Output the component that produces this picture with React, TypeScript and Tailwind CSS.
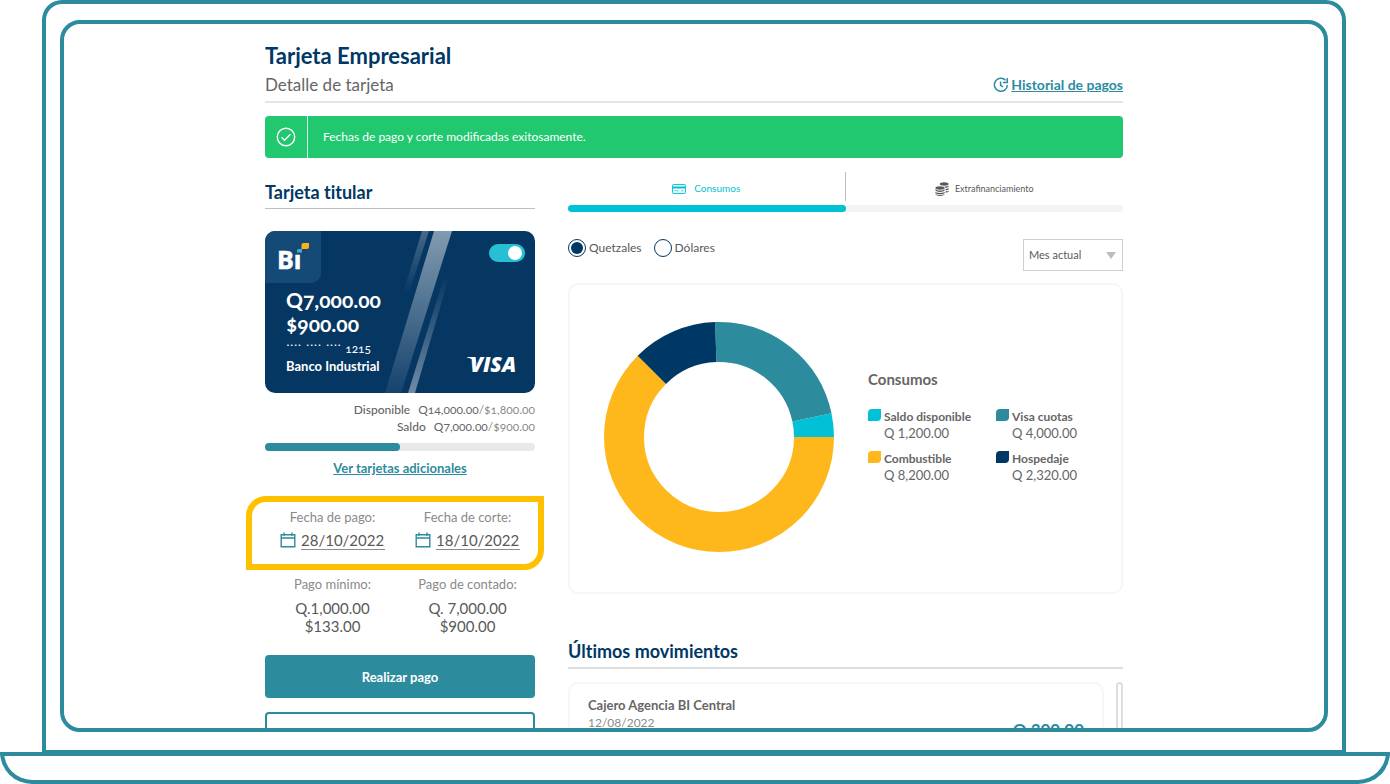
import React from 'react';

interface Slice {
  label: string;
  amount: string;
  color: string;
  swatch: string;
  start: number;
  sweep: number;
}

const slices: Slice[] = [
  { label: 'Saldo disponible', amount: 'Q 1,200.00', color: '#00c1d5', swatch: 'bg-[#00c1d5]', start: 348, sweep: 12 },
  { label: 'Visa cuotas', amount: 'Q 4,000.00', color: '#2d8b9e', swatch: 'bg-[#2d8b9e]', start: 268, sweep: 80 },
  { label: 'Combustible', amount: 'Q 8,200.00', color: '#ffb81c', swatch: 'bg-[#ffb81c]', start: 0, sweep: 225 },
  { label: 'Hospedaje', amount: 'Q 2,320.00', color: '#003865', swatch: 'bg-[#003865]', start: 225, sweep: 43 },
];

const payments = [
  { label: 'Pago mínimo:', quetzales: 'Q.1,000.00', dollars: '$133.00' },
  { label: 'Pago de contado:', quetzales: 'Q. 7,000.00', dollars: '$900.00' },
];

const dates = [
  { id: 'fecha-pago', label: 'Fecha de pago:', value: '28/10/2022' },
  { id: 'fecha-corte', label: 'Fecha de corte:', value: '18/10/2022' },
];

function HistoryIcon() {
  return (
    <svg viewBox="0 0 16 16" className="size-4" fill="none" stroke="currentColor" strokeWidth="1.5">
      <path d="M14.4 8A6.5 6.5 0 1 1 12.6 3.3" />
      <path d="M14.3 1v4.4h-4.4" />
      <path d="M7.6 4.6v3.8l2.4 1.4" />
    </svg>
  );
}

function CheckIcon() {
  return (
    <svg viewBox="0 0 20 20" className="size-5" fill="none" stroke="currentColor" strokeWidth="1.4">
      <circle cx="10" cy="10" r="8.7" />
      <path d="M5.6 10.3l2.9 2.9 6-6" />
    </svg>
  );
}

function CalendarIcon() {
  return (
    <svg viewBox="0 0 16 16" className="size-4" fill="none" stroke="#2d8b9e" strokeWidth="1.4">
      <path d="M1.2 2.8h13.6v11.9H1.2z" />
      <path d="M1.2 6h13.6M4 .6v3.2M12 .6v3.2" />
    </svg>
  );
}

function CardIcon() {
  return (
    <svg viewBox="0 0 14 10" className="h-[10px] w-[14px]" fill="none" stroke="currentColor">
      <rect x=".6" y=".6" width="12.8" height="8.8" rx=".6" />
      <path d="M.6 3.6h12.8" strokeWidth="2" />
      <path d="M2.5 6.8h4M9 6.8h2.5" strokeWidth=".8" />
    </svg>
  );
}

function CoinsIcon() {
  return (
    <svg viewBox="0 0 14 14" className="size-[14px]" fill="currentColor">
      <ellipse cx="9.2" cy="2" rx="4.4" ry="1.7" />
      <path d="M9.5 4.5c2 0 3.6-.5 4.1-1.1v1.3c-.5.7-1.9 1.1-3.4 1.1zM10.6 7c1.4-.1 2.5-.5 3-1v1.3c-.5.6-1.6 1-3 1zM10.6 9.4c1.4-.1 2.5-.5 3-1v1.2c-.5.6-1.6 1-3 1.1z" />
      <ellipse cx="5" cy="6" rx="4.6" ry="1.7" />
      <path d="M.4 7.3c.7.8 2.5 1.2 4.6 1.2s3.9-.4 4.6-1.2v1.3c-.6.8-2.5 1.3-4.6 1.3S1 9.4.4 8.6zM.4 9.7c.7.8 2.5 1.2 4.6 1.2s3.9-.4 4.6-1.2V11c-.6.8-2.5 1.3-4.6 1.3S1 11.8.4 11zM.4 12c.7.8 2.5 1.1 4.6 1.1s3.9-.3 4.6-1.1v.6c-.6.8-2.5 1.3-4.6 1.3S1 13.4.4 12.6z" />
    </svg>
  );
}

function BiLogo() {
  return (
    <svg viewBox="0 0 36 34" className="h-[34px] w-9" role="img" aria-label="Bi">
      <text x="0" y="26" fontSize="25" fontWeight="700" fill="#fff" stroke="#fff" strokeWidth=".6" fontFamily="'Open Sans', sans-serif">
        Bı
      </text>
      <path d="M21.5 6H25v3.5h-5V7.5q0-1.5 1.5-1.5z" fill="#4aa9cf" />
      <path d="M26.5 0H32v4q0 2-2 2h-5.5V2q0-2 2-2z" fill="#fcb316" />
    </svg>
  );
}

function VisaLogo() {
  return (
    <svg viewBox="0 0 54 30" className="h-[30px] w-[54px]" role="img" aria-label="Visa">
      <text x="5" y="28" fontSize="21" fontWeight="800" fontStyle="italic" fill="#fff" fontFamily="'Open Sans', sans-serif">
        VISA
      </text>
      <path d="M2 13h8l1.5 7Q8 14.500 2 13.600z" fill="#fff" />
    </svg>
  );
}

function CardStripes() {
  return (
    <svg viewBox="0 0 270 162" preserveAspectRatio="none" className="absolute inset-0 size-full">
      <defs>
        <linearGradient id="stripe" x1="0" y1="0" x2="0" y2="1">
          <stop offset="0" stopColor="#fff" stopOpacity=".5" />
          <stop offset="1" stopColor="#fff" stopOpacity=".06" />
        </linearGradient>
        <linearGradient id="stripeLow" x1="0" y1="0" x2="0" y2="1">
          <stop offset="0" stopColor="#fff" stopOpacity="0" />
          <stop offset="1" stopColor="#fff" stopOpacity=".42" />
        </linearGradient>
        <linearGradient id="stripeTop" x1="0" y1="0" x2="0" y2="1">
          <stop offset="0" stopColor="#fff" stopOpacity=".25" />
          <stop offset="1" stopColor="#fff" stopOpacity="0" />
        </linearGradient>
      </defs>
      <path d="M169 0h18l-51 162h-16z" fill="url(#stripe)" />
      <path d="M157 0h7l-20 62h-6z" fill="url(#stripeTop)" />
      <path d="M179 46h5l-34 116h-7z" fill="url(#stripeLow)" />
    </svg>
  );
}

function CreditCard() {
  return (
    <div className="relative mt-[22px] h-[162px] overflow-hidden rounded-[10px] bg-[#063763] text-white">
      <CardStripes />
      <div className="relative flex h-full flex-col">
        <div className="flex items-start justify-between">
          <div className="h-[52px] w-14 rounded-br-[10px] bg-[#164a76] pt-3 pl-3">
            <BiLogo />
          </div>
          <input
            type="checkbox"
            role="switch"
            defaultChecked
            aria-label="Tarjeta activa"
            className="mt-[13px] mr-[10px] flex h-[18px] w-9 appearance-none items-center justify-start rounded-full bg-slate-400 px-[3px] after:size-[14px] after:rounded-full after:bg-white checked:justify-end checked:bg-[#26bfd3]"
          />
        </div>
        <div className="mt-[5px] pl-[21px] text-[21px] leading-6 font-bold oldstyle-nums">
          <p>Q7,000.00</p>
          <p>$900.00</p>
        </div>
        <div className="flex items-end justify-between pr-4 pl-[21px]">
          <div>
            <p className="flex gap-1">
              <span className="text-base leading-4 font-light">···· ···· ····</span>
              <span className="pt-1 text-xs leading-[18px] oldstyle-nums">1215</span>
            </p>
            <p className="text-[13px] leading-4 font-bold">Banco Industrial</p>
          </div>
          <VisaLogo />
        </div>
      </div>
    </div>
  );
}

function DonutChart() {
  return (
    <svg viewBox="0 0 230 230" className="size-[230px] shrink-0" fill="none">
      {slices.map((s) => (
        <circle
          key={s.label}
          cx="115"
          cy="115"
          r="95"
          stroke={s.color}
          strokeWidth="40"
          pathLength={360}
          strokeDasharray={`${s.sweep} ${360 - s.sweep}`}
          strokeDashoffset={-s.start}
        />
      ))}
    </svg>
  );
}

function CardColumn() {
  return (
    <section>
      <h2 className="border-b border-[#bdbdbd] pt-2 pb-1 text-lg leading-6 font-bold text-[#003865] [font-variant-ligatures:none]">
        Tarjeta titular
      </h2>
      <CreditCard />
      <div className="mt-2 text-right text-xs leading-[17px] text-[#8a8a8a] oldstyle-nums">
        <p>
          <span className="mr-2 font-medium text-[#666]">Disponible</span>
          <span className="text-[#666]">Q14,000.00</span>/$1,800.00
        </p>
        <p>
          <span className="mr-2 font-medium text-[#666]">Saldo</span>
          <span className="text-[#666]">Q7,000.00</span>/$900.00
        </p>
      </div>
      <div className="mt-2 h-2 rounded-full bg-[#e9e9e9]">
        <div className="h-2 w-1/2 rounded-full bg-[#2d8b9e]" />
      </div>
      <p className="mt-[7px] text-center text-[13px] leading-5 font-bold text-[#2d8b9e]">
        <a href="#adicionales" className="underline">Ver tarjetas adicionales</a>
      </p>

      <div className="mt-[18px] -mr-[9px] -ml-[19px] grid grid-cols-2 rounded-tl-[20px] rounded-br-[20px] border-[6px] border-[#ffc000] pt-[5px] pr-[3px] pb-[14px] pl-[13px]">
        {dates.map((d) => (
          <div key={d.id} className="flex flex-col items-center gap-[3px]">
            <label htmlFor={d.id} className="text-[13px] leading-5 text-[#8a8a8a]">{d.label}</label>
            <div className="flex items-center gap-[5px]">
              <CalendarIcon />
              <input
                id={d.id}
                type="text"
                defaultValue={d.value}
                className="h-5 w-[84px] border-b border-[#8a8a8a] text-[15px] leading-5 text-[#595959]"
              />
            </div>
          </div>
        ))}
      </div>

      <div className="mt-1 grid grid-cols-2 text-center">
        {payments.map((p) => (
          <div key={p.label}>
            <p className="text-[13px] leading-5 text-[#8a8a8a]">{p.label}</p>
            <p className="mt-[5px] text-[15px] leading-[18px] text-[#595959]">{p.quetzales}</p>
            <p className="text-[15px] leading-[18px] text-[#595959]">{p.dollars}</p>
          </div>
        ))}
      </div>

      <button type="button" className="mt-5 block h-[43px] w-full rounded bg-[#2d8b9e] pt-[2px] text-[13px] font-bold text-white">
        Realizar pago
      </button>
      <button type="button" aria-label="Más opciones" className="mt-[14px] block h-[43px] w-full rounded border-2 border-[#2d8b9e]" />
    </section>
  );
}

function ActivityColumn() {
  return (
    <section>
      <div className="grid h-[29px] grid-cols-2">
        <button type="button" className="flex items-center justify-center gap-2 border-r border-[#bdbdbd] pt-1 text-[10px] text-[#00c1d5]">
          <CardIcon />
          Consumos
        </button>
        <button type="button" className="flex items-center justify-center gap-[6px] pt-1 text-[9px] text-[#595959]">
          <CoinsIcon />
          Extrafinanciamiento
        </button>
      </div>
      <div className="mt-1 h-[7px] rounded-full bg-[#f4f4f4]">
        <div className="h-[7px] w-1/2 rounded-full bg-[#00c1d5]" />
      </div>

      <div className="mt-[27px] flex items-start justify-between text-[#595959]">
        <div className="flex gap-3 text-xs leading-[18px]">
          <label className="flex gap-[3px]">
            <input
              type="radio"
              name="moneda"
              defaultChecked
              className="size-[18px] appearance-none rounded-full border border-[#003865] bg-clip-content p-[2px] checked:bg-[#003865]"
            />
            Quetzales
          </label>
          <label className="flex gap-[3px]">
            <input
              type="radio"
              name="moneda"
              className="size-[18px] appearance-none rounded-full border border-[#003865] bg-clip-content p-[2px] checked:bg-[#003865]"
            />
            Dólares
          </label>
        </div>
        <div className="relative">
          <select
            aria-label="Periodo"
            className="h-8 w-[100px] appearance-none border border-[#cfcfcf] bg-white pl-[5px] text-[11px] text-[#595959]"
          >
            <option>Mes actual</option>
          </select>
          <svg viewBox="0 0 10 7" className="pointer-events-none absolute top-[13px] right-[7px] h-[7px] w-[10px]">
            <path d="M0 0h10L5 7z" fill="#bdbdbd" />
          </svg>
        </div>
      </div>

      <div className="mt-3 flex h-[311px] gap-[34px] rounded-[10px] border-2 border-[#f6f6f6] pt-[37px] pl-[34px]">
        <DonutChart />
        <div className="pt-[47px] text-[#666]">
          <h3 className="text-[15px] leading-5 font-bold">Consumos</h3>
          <ul className="mt-[19px] grid grid-cols-[112px_112px] gap-x-4 gap-y-2">
            {slices.map((s) => (
              <li key={s.label} className="flex gap-[3px] text-[13px] leading-[17px]">
                <span className={`mt-px h-3 w-[13px] shrink-0 rounded-tl-[4px] rounded-br-[4px] ${s.swatch}`} />
                <span className="whitespace-nowrap">
                  <span className="block text-xs leading-[17px] font-bold">{s.label}</span>
                  {s.amount}
                </span>
              </li>
            ))}
          </ul>
        </div>
      </div>

      <h2 className="mt-[45px] border-b-2 border-[#dedede] pb-1 text-lg leading-6 font-bold text-[#003865] [font-variant-ligatures:none]">
        Últimos movimientos
      </h2>
      <div className="mt-[13px] flex gap-3">
        <article className="flex h-24 flex-1 items-start justify-between rounded-[10px] border-2 border-[#f6f6f6] px-[18px] pt-[11px]">
          <div>
            <h3 className="text-[13px] leading-5 font-bold text-[#666]">Cajero Agencia BI Central</h3>
            <p className="text-xs leading-4 text-[#8a8a8a]">12/08/2022</p>
          </div>
          <p className="mt-[25px] text-[17px] leading-5 font-bold text-[#2d8b9e]">Q 300.00</p>
        </article>
        <div className="w-[7px] rounded-full border-2 border-[#dedede]" />
      </div>
    </section>
  );
}

export default function App() {
  return (
    <div className="flex h-screen flex-col bg-white font-['Lato',sans-serif]">
      <div className="mr-11 ml-[42px] flex min-h-0 flex-1 flex-col rounded-t-[20px] border-4 border-b-2 border-[#2d8b9e] px-[14px] pt-4 pb-[18px]">
        <main className="min-h-0 flex-1 overflow-hidden rounded-[20px] border-4 border-[#2d8b9e]">
          <div className="mx-auto max-w-[858px] pt-[18px]">
            <h1 className="text-[22px] leading-7 font-bold text-[#003865]">Tarjeta Empresarial</h1>
            <div className="flex items-center justify-between border-b-2 border-[#e5e5e5] pt-[3px] pb-1">
              <p className="text-[17px] leading-6 text-[#666]">Detalle de tarjeta</p>
              <a href="#historial" className="flex items-center gap-[2px] text-sm font-bold text-[#2d8b9e] underline">
                <HistoryIcon />
                Historial de pagos
              </a>
            </div>

            <div role="status" className="mt-[13px] flex h-[42px] rounded-sm bg-[#21c870] text-xs text-white">
              <div className="flex w-[43px] items-center justify-center border-r border-white/80">
                <CheckIcon />
              </div>
              <p className="self-center pl-[15px]">Fechas de pago y corte modificadas exitosamente.</p>
            </div>

            <div className="mt-[14px] grid grid-cols-[270px_1fr] gap-[33px]">
              <CardColumn />
              <ActivityColumn />
            </div>
          </div>
        </main>
      </div>
      <div className="h-8 shrink-0 rounded-b-[32px] border-4 border-[#2d8b9e]" />
    </div>
  );
}
